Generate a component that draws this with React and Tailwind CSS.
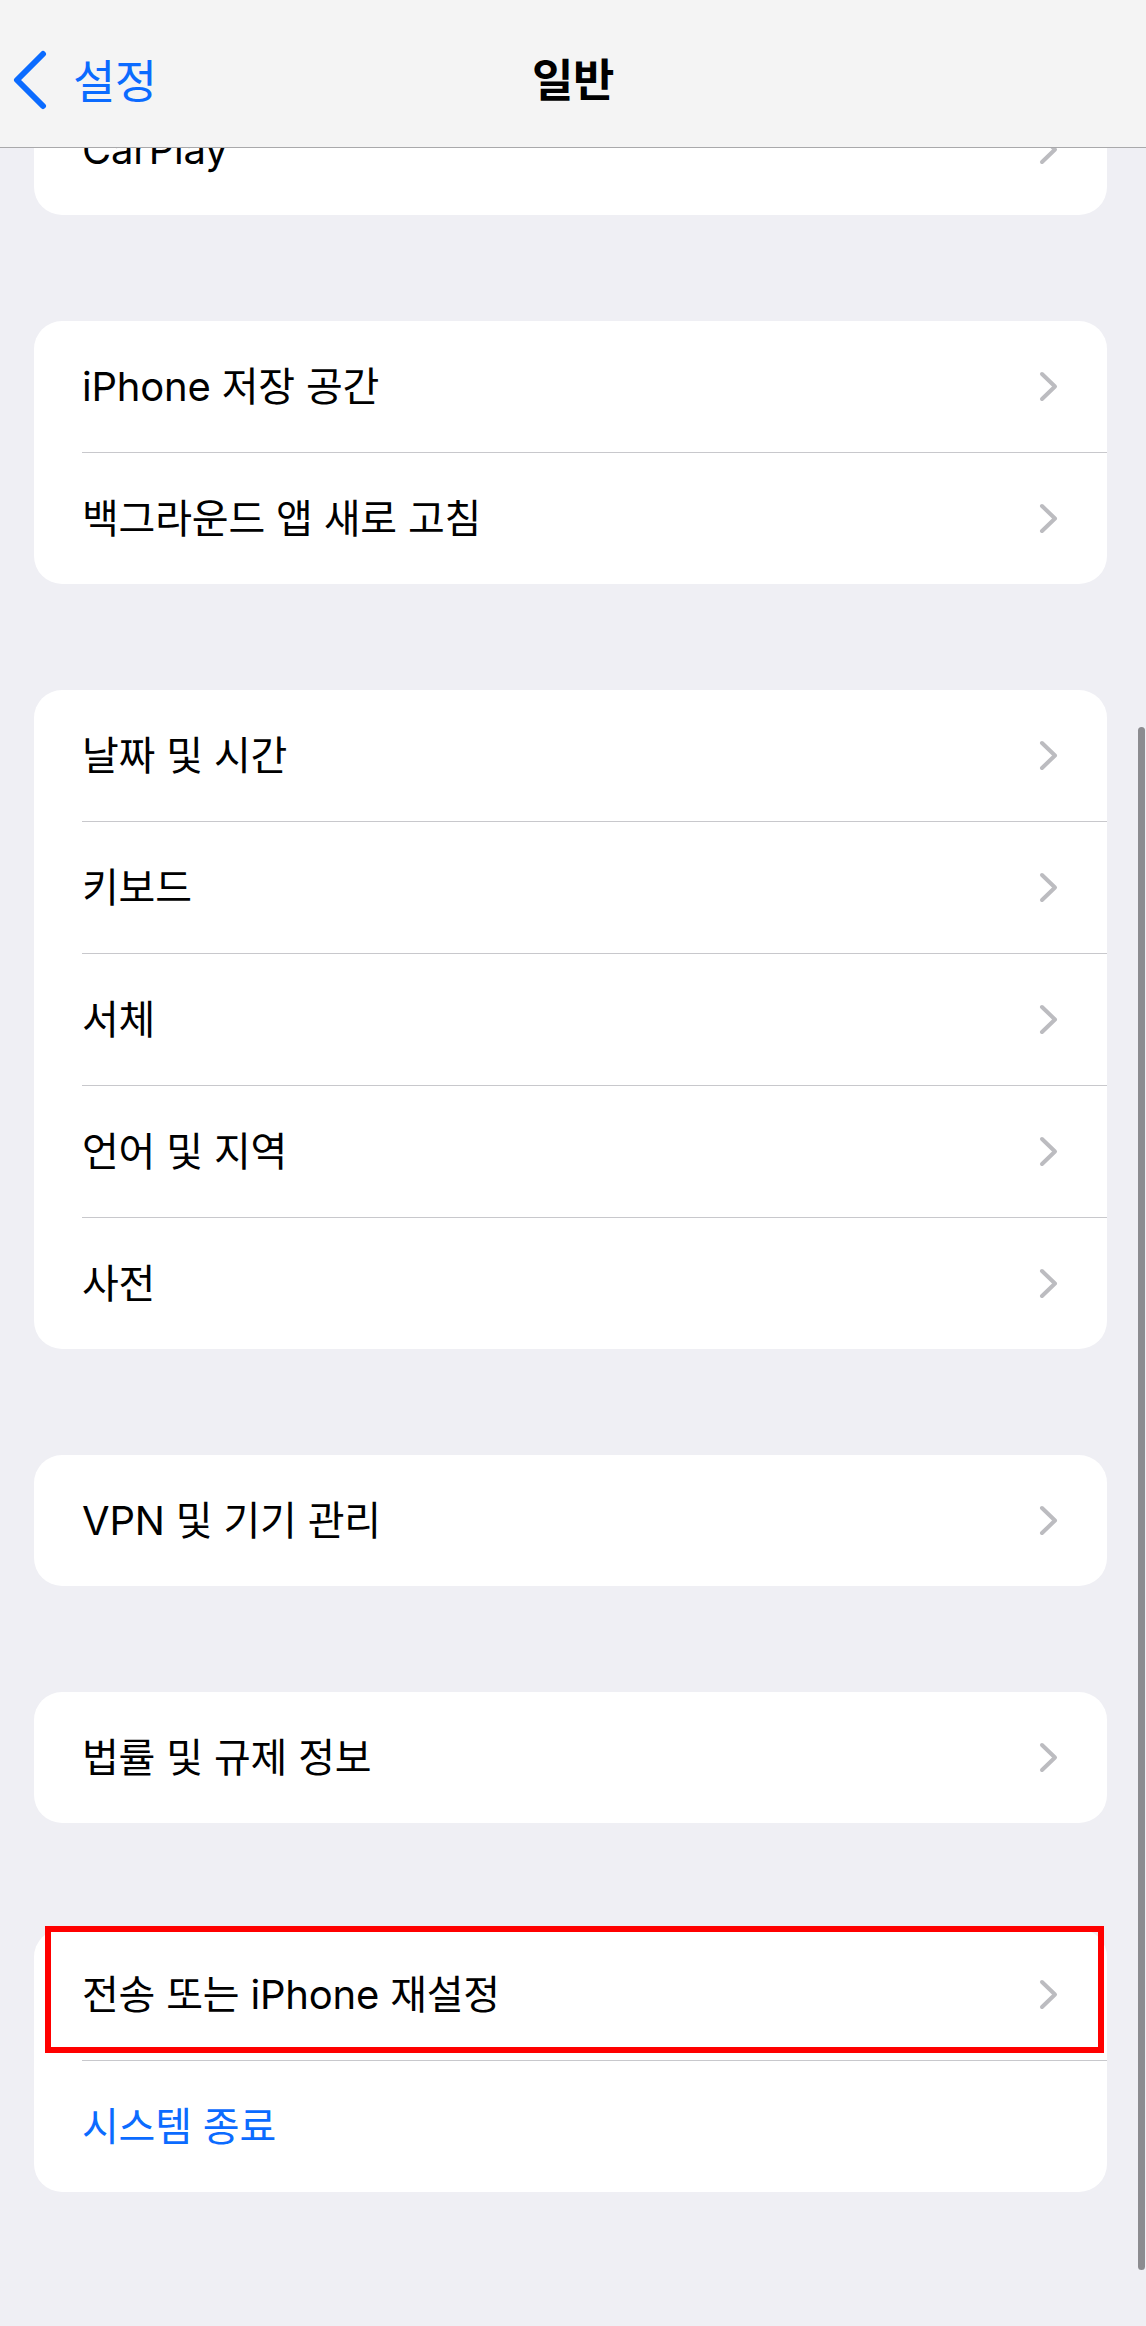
import React from "react";

const FONT = { fontFamily: 'Inter, "Noto Sans CJK KR", "Noto Sans", sans-serif' };

function Chevron() {
  return (
    <svg width="19" height="31" viewBox="0 0 19 31" className="shrink-0">
      <polyline points="3,3 16,15.5 3,28" fill="none" stroke="#bcbcc0" strokeWidth="4" strokeLinecap="round" strokeLinejoin="round" />
    </svg>
  );
}

function Row({ label, blue, chevron = true, children }) {
  return (
    <div className="relative h-[131px] flex items-center justify-between pl-[48px] pr-[49px]">
      <span className={`text-[40px] leading-none tracking-[-0.2px] ${blue ? "text-[#0b6bff]" : "text-black"}`}>{label}</span>
      {chevron && <Chevron />}
      {children}
    </div>
  );
}

function Sep() {
  return <div className="ml-[48px] h-px bg-[#c8c8cc]" />;
}

function Card({ children }) {
  return <div className="ml-[34px] mr-[39px] bg-white rounded-[28px]">{children}</div>;
}

export default function App() {
  return (
    <div className="relative w-[1146px] h-[2326px] bg-[#efeff4] overflow-hidden" style={FONT}>
      {/* content */}
      <div className="flex flex-col gap-[106px] pt-[84px]">
        <Card>
          <Row label="CarPlay" />
        </Card>
        <Card>
          <Row label="iPhone 저장 공간" />
          <Sep />
          <Row label="백그라운드 앱 새로 고침" />
        </Card>
        <Card>
          <Row label="날짜 및 시간" />
          <Sep />
          <Row label="키보드" />
          <Sep />
          <Row label="서체" />
          <Sep />
          <Row label="언어 및 지역" />
          <Sep />
          <Row label="사전" />
        </Card>
        <Card>
          <Row label="VPN 및 기기 관리" />
        </Card>
        <Card>
          <Row label="법률 및 규제 정보" />
        </Card>
        <Card>
          <Row label="전송 또는 iPhone 재설정">
            <div className="absolute top-[-3px] left-[11px] w-[1059px] h-[127px] border-[6px] border-[#ff0000]" />
          </Row>
          <Sep />
          <Row label="시스템 종료" blue chevron={false} />
        </Card>
      </div>

      {/* nav bar */}
      <div className="absolute top-0 left-0 right-0 h-[148px] bg-[#f4f4f4] border-b border-[#a9a9ab] grid grid-cols-[1fr_auto_1fr] items-center pt-[14px]">
        <div className="flex items-center pl-[13px] gap-[24px]">
          <svg width="36" height="60" viewBox="0 0 36 60" className="mt-[-2px]">
            <polyline points="30,4 4,30 30,56" fill="none" stroke="#0b6bff" strokeWidth="6" strokeLinecap="round" strokeLinejoin="round" />
          </svg>
          <span className="text-[46px] leading-none text-[#0b6bff] tracking-[-0.5px]">설정</span>
        </div>
        <span className="text-[45px] leading-none font-semibold text-black tracking-[-0.5px]">일반</span>
        <div />
      </div>

      {/* scrollbar */}
      <div className="absolute left-[1138px] top-[727px] w-[7px] h-[1543px] rounded-full bg-[#8c8c90]" />
    </div>
  );
}
